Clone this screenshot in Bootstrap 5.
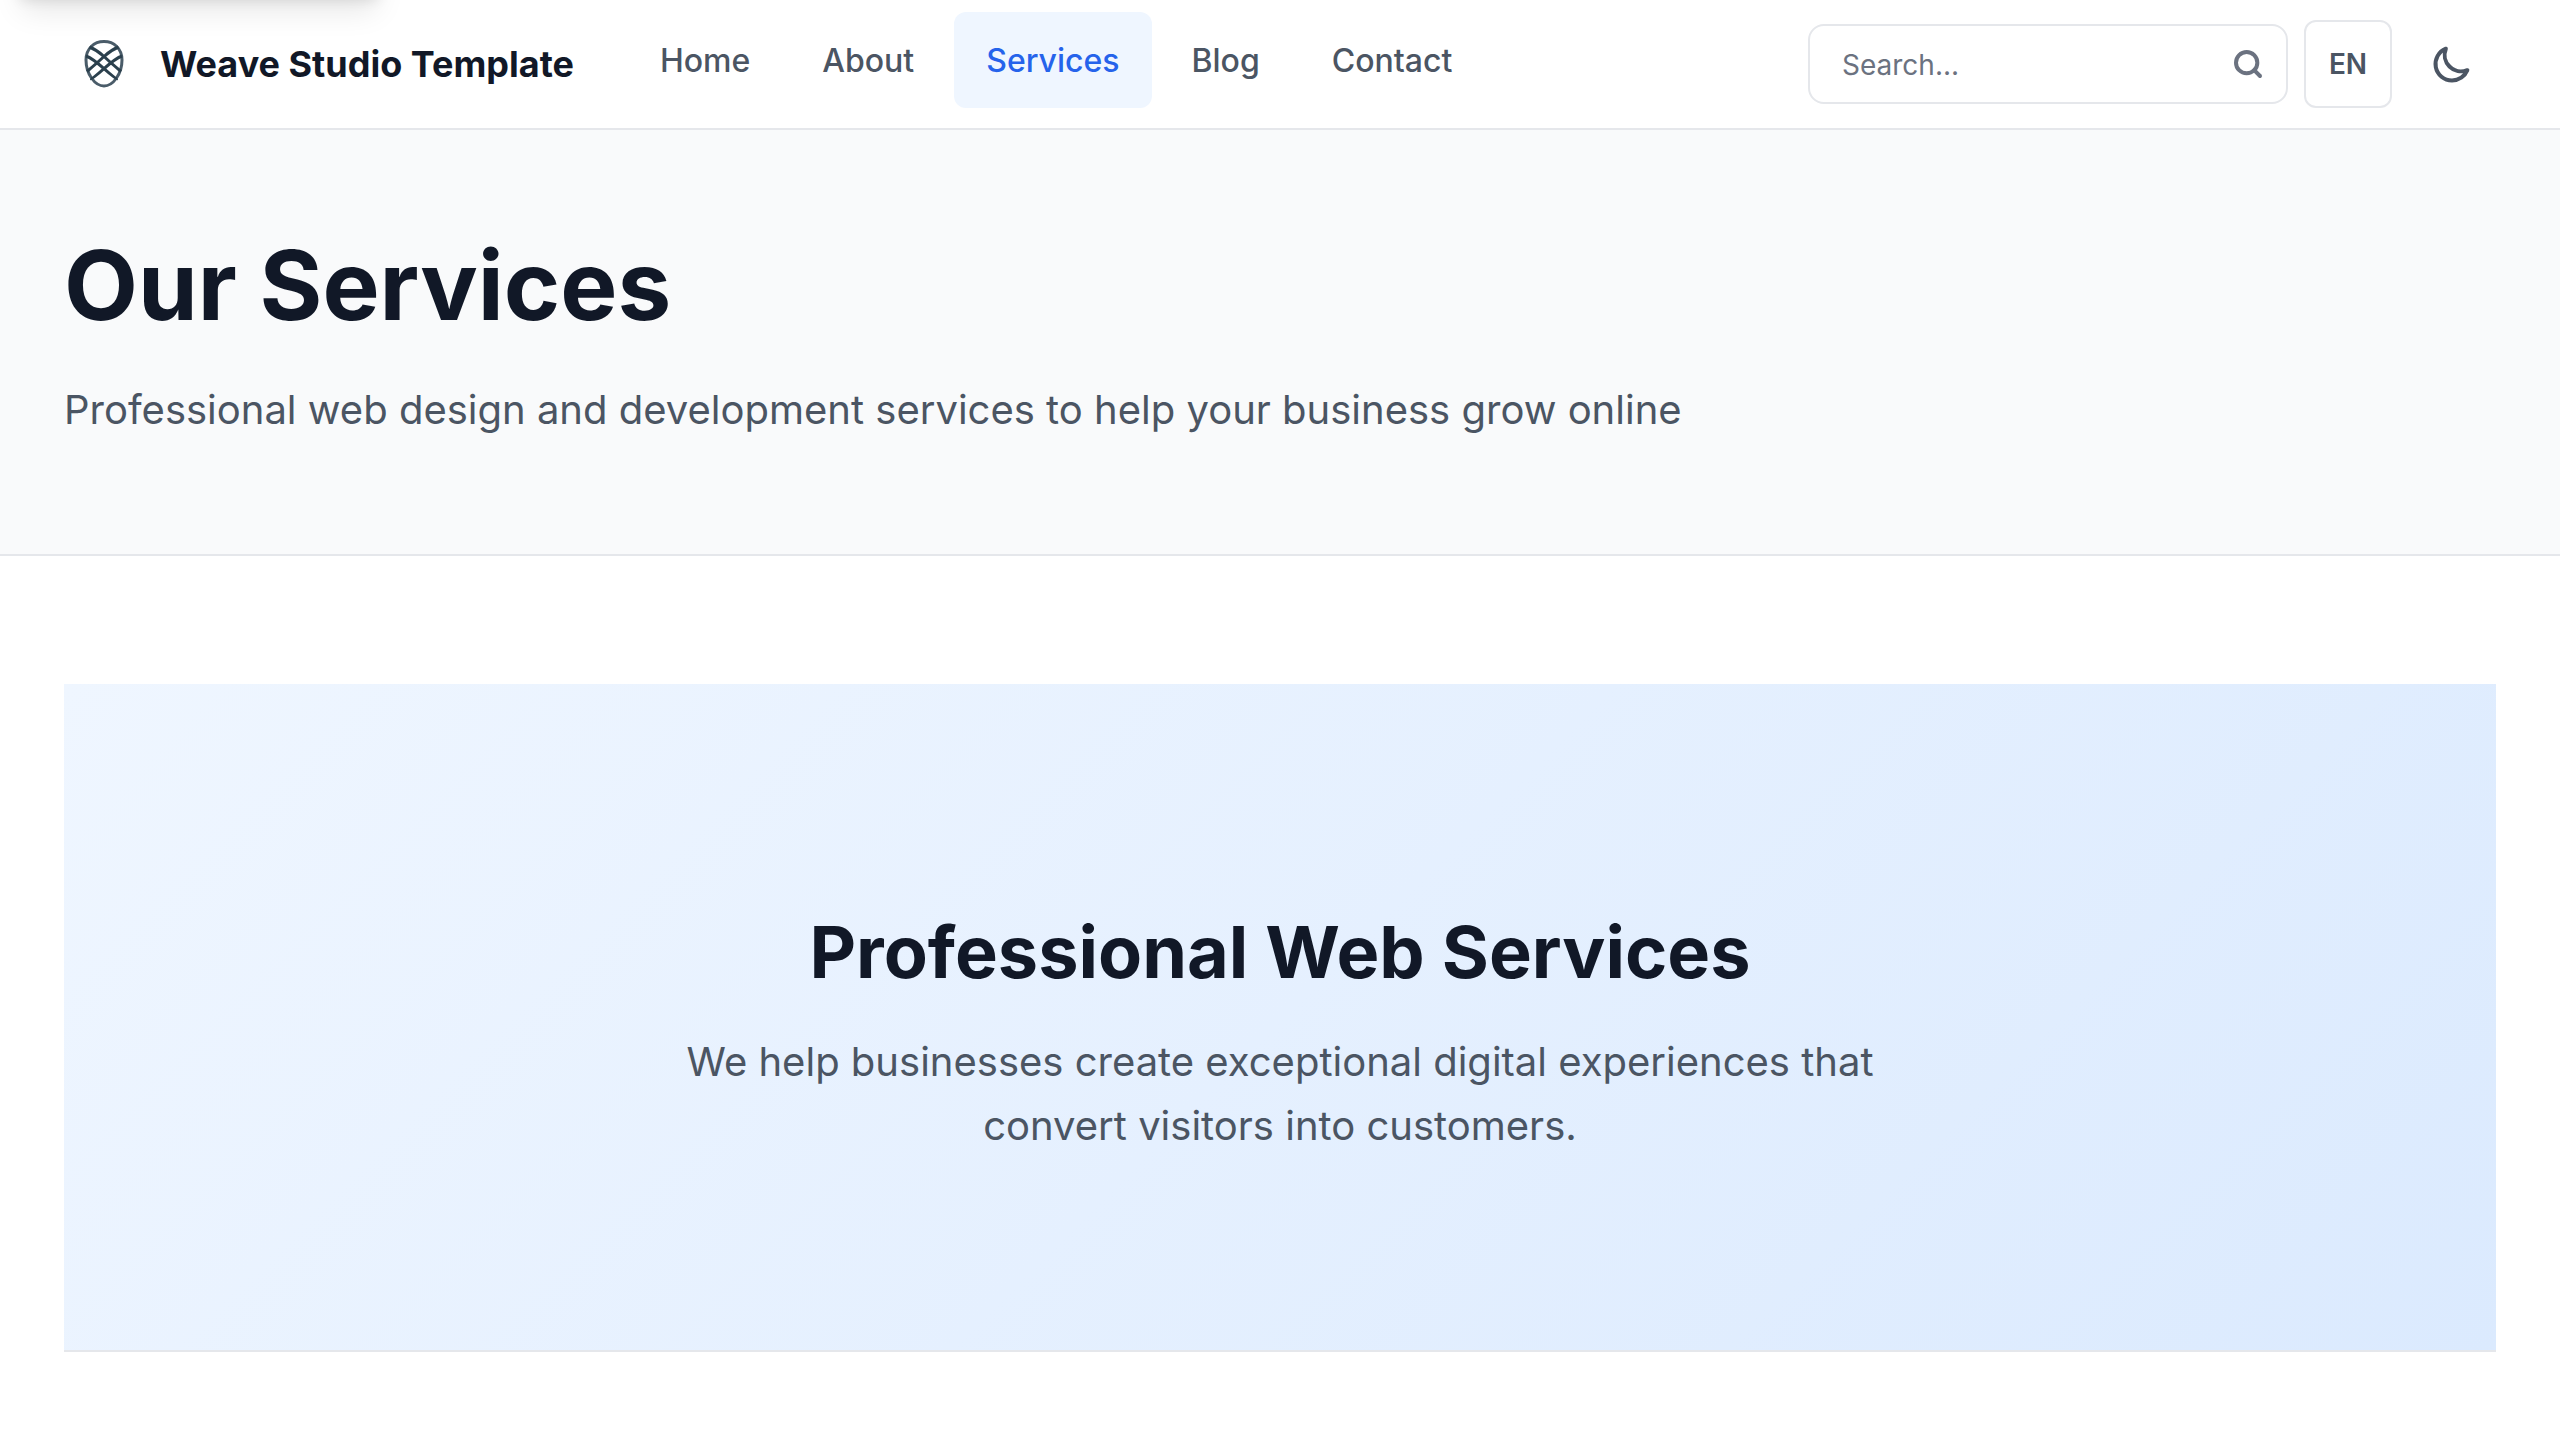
<!DOCTYPE html>
<html lang="en">
<head>
<meta charset="utf-8">
<meta name="viewport" content="width=device-width, initial-scale=1">
<title>Our Services</title>
<link href="https://cdn.jsdelivr.net/npm/bootstrap@5.3.0/dist/css/bootstrap.min.css" rel="stylesheet">
<style>
:root { --ink: #111827; --soft: #4b5563; --muted: #6b7280; --line: #e5e7eb; --tint: #eff6ff; --accent: #2563eb; }
body { font-family: Inter, "Liberation Sans", sans-serif; color: var(--ink); background: #fff; }
.skip-link { left: 16px; top: -92px; width: 366px; height: 88px; background: #fff; color: var(--ink); box-shadow: 0 20px 30px -6px rgba(0,0,0,.1), 0 8px 12px -4px rgba(0,0,0,.1); }
.site-header { padding: 0 64px; border-bottom: 2px solid var(--line); min-height: 130px; }
.brand { font-size: 36px; line-height: 56px; font-weight: 700; color: var(--ink); gap: 32px; margin-right: 54px; padding-left: 16px; }
.main-nav { margin-bottom: 8px; gap: 8px; }
.main-nav .nav-link { font-size: 32px; line-height: 48px; font-weight: 500; color: var(--soft); padding: 25px 32px 23px; border-radius: 12px; }
.main-nav .nav-link.active { color: var(--accent); background: var(--tint); }
.search-box { width: 480px; }
.search-box .form-control { height: 80px; font-size: 28px; line-height: 40px; padding: 18px 80px 16px 32px; border: 2px solid var(--line); border-radius: 16px; color: var(--ink); }
.search-box .form-control::placeholder { color: var(--muted); }
.search-box .btn { right: 24px; top: 24px; color: var(--muted); }
.lang-btn { height: 88px; width: 88px; border: 2px solid var(--line); border-radius: 12px; font-size: 28px; font-weight: 600; color: var(--soft); }
.theme-btn { width: 88px; height: 88px; color: var(--soft); }
.page-head { background: #f9fafb; border-bottom: 2px solid var(--line); padding: 95px 64px 112px; }
.page-head h1 { font-size: 96px; line-height: 120px; font-weight: 700; margin-bottom: 33px; }
.intro { font-size: 40px; line-height: 64px; color: var(--soft); }
.main-area { padding: 128px 64px; }
.hero { background: linear-gradient(135deg, #eff6ff, #dbeafe); border-bottom: 2px solid var(--line); padding: 223px 64px 192px; }
.hero h2 { font-size: 72px; line-height: 90px; font-weight: 700; margin-bottom: 33px; }
.hero .intro { max-width: 1280px; }
</style>
</head>
<body>
<a class="skip-link position-absolute" href="#main" aria-label="Skip to content"></a>
<header class="site-header d-flex align-items-center">
  <a class="brand d-flex align-items-center text-decoration-none" href="#">
    <svg width="48" height="48" viewBox="0 0 48 48" fill="none" stroke="#2b404d" stroke-width="3" aria-hidden="true"><path stroke="#4a5c69" d="M24 1.600C34 1.600 42 8.500 42 20C42 34 33 46 24 46S6 34 6 20C6 8.500 14 1.600 24 1.600Z"/><path d="M9.500 7Q17 10 24 16.500T41 31.500M6 16Q12 18 24 28.700T37.500 38.700M38.500 7Q31 10 24 16.500T7 31.500M42 16Q36 18 24 28.700T10.500 38.700"/></svg>
    <span>Weave Studio Template</span>
  </a>
  <nav class="main-nav nav" aria-label="Main">
    <a class="nav-link" href="#">Home</a>
    <a class="nav-link" href="#">About</a>
    <a class="nav-link active" aria-current="page" href="#">Services</a>
    <a class="nav-link" href="#">Blog</a>
    <a class="nav-link" href="#">Contact</a>
  </nav>
  <div class="d-flex align-items-center gap-3 ms-auto">
    <form class="search-box position-relative" role="search">
      <input class="form-control" type="search" placeholder="Search..." aria-label="Search">
      <button class="btn p-0 border-0 position-absolute d-flex" type="submit" aria-label="Search"><svg width="32" height="32" viewBox="0 0 24 24" fill="none" stroke="currentColor" stroke-width="3" stroke-linecap="round"><circle cx="11" cy="11" r="8"/><path d="m21 21-4.350-4.350"/></svg></button>
    </form>
    <button class="lang-btn btn p-0" type="button">EN</button>
    <button class="theme-btn btn p-0 border-0 d-flex align-items-center justify-content-center" type="button" aria-label="Toggle dark mode"><svg width="44" height="44" viewBox="0 0 24 24" fill="none" stroke="currentColor" stroke-width="2.200" stroke-linecap="round" stroke-linejoin="round"><path d="M20.354 15.354A9 9 0 0 1 8.646 3.646 9.003 9.003 0 0 0 12 21a9.003 9.003 0 0 0 8.354-5.646z"/></svg></button>
  </div>
</header>
<section class="page-head">
  <h1>Our Services</h1>
  <p class="intro mb-0">Professional web design and development services to help your business grow online</p>
</section>
<main id="main" class="main-area">
  <section class="hero text-center">
    <h2>Professional Web Services</h2>
    <p class="intro mx-auto mb-0">We help businesses create exceptional digital experiences that convert visitors into customers.</p>
  </section>
</main>
<script src="https://cdn.jsdelivr.net/npm/bootstrap@5.3.0/dist/js/bootstrap.bundle.min.js"></script>
</body>
</html>
